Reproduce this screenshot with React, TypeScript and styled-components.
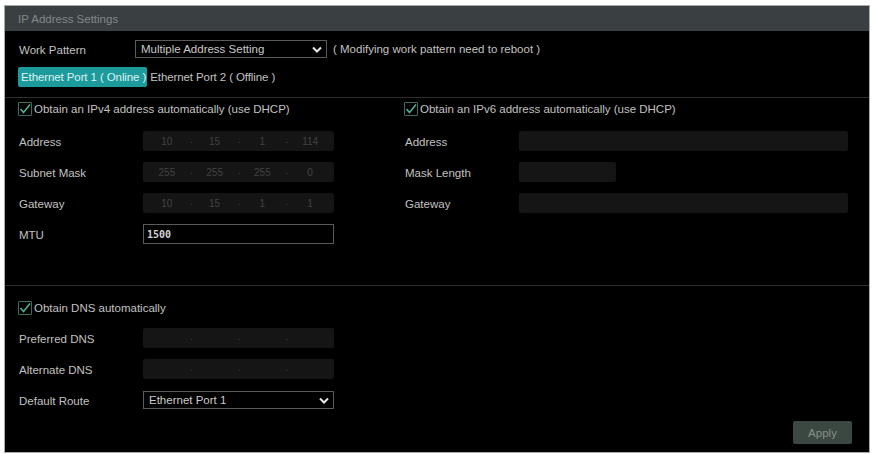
import styled, { createGlobalStyle } from 'styled-components';

const GlobalStyle = createGlobalStyle`
    html, body {
        margin: 0;
        padding: 0;
        background: #ffffff;
    }
    * {
        box-sizing: border-box;
    }
`;

const Page = styled.div`
    width: 874px;
    height: 454px;
    padding: 5px 4px 1px 4px;
    font-family: "Liberation Sans", Arial, sans-serif;
    font-size: 11.5px;
    color: #c2c2c2;
`;

const Panel = styled.div`
    width: 866px;
    height: 448px;
    border: 1px solid #a9a9a9;
    background: #000000;
    display: flex;
    flex-direction: column;
`;

const TitleBar = styled.div`
    height: 25px;
    flex-shrink: 0;
    background: #3a3f42;
    color: #80878b;
    display: flex;
    align-items: center;
    padding-left: 13px;
`;

const Body = styled.div`
    flex: 1;
    display: flex;
    flex-direction: column;
`;

const TopArea = styled.div`
    padding: 9px 14px 10px 14px;
    display: flex;
    flex-direction: column;
    gap: 9px;
`;

const Row = styled.div`
    display: flex;
    align-items: center;
    height: 18px;
`;

const Label = styled.div<{ $w: number }>`
    width: ${p => p.$w}px;
    flex-shrink: 0;
    padding-top: 2px;
    white-space: nowrap;
`;

const Select = styled.div<{ $w: number }>`
    width: ${p => p.$w}px;
    height: 18px;
    border: 1px solid #5a5a5a;
    background: #000;
    display: flex;
    align-items: center;
    justify-content: space-between;
    padding: 0 4px 0 5px;
    color: #cacaca;
`;

const Note = styled.span`
    margin-left: 6px;
    white-space: nowrap;
`;

const Tabs = styled.div`
    display: flex;
    align-items: center;
    height: 20px;
`;

const Tab = styled.div<{ $active?: boolean }>`
    height: 20px;
    display: flex;
    align-items: center;
    padding: 0 1px 0 3px;
    margin-left: ${p => (p.$active ? '-1px' : '0')};
    border-radius: 2px;
    background: ${p => (p.$active ? '#1c9a9c' : 'transparent')};
    color: ${p => (p.$active ? '#dff2f2' : '#c2c2c2')};
    white-space: nowrap;
    letter-spacing: -0.1px;
`;

const Divider = styled.div`
    height: 1px;
    background: #2e2e2e;
`;

const Section = styled.div<{ $top: number; $h?: number }>`
    padding: ${p => p.$top}px 14px 0 14px;
    height: ${p => (p.$h ? `${p.$h}px` : 'auto')};
    display: grid;
    grid-template-columns: 315px 445px;
    column-gap: 71px;
    align-content: start;
`;

const Column = styled.div`
    display: flex;
    flex-direction: column;
`;

const CheckRow = styled.div`
    display: flex;
    align-items: center;
    gap: 2px;
    height: 14px;
    margin-left: -1px;
    white-space: nowrap;
`;

const Box = styled.div`
    width: 14px;
    height: 14px;
    border: 1px solid #3f6c62;
    border-radius: 1px;
    display: flex;
    align-items: center;
    justify-content: center;
`;

const FieldGrid = styled.div<{ $label: number; $top: number }>`
    margin-top: ${p => p.$top}px;
    display: grid;
    grid-template-columns: ${p => p.$label}px 1fr;
    grid-auto-rows: 20px;
    row-gap: 11px;
    align-items: center;
`;

const IpBox = styled.div`
    width: 191px;
    height: 20px;
    background: #151515;
    border-radius: 2px;
    display: grid;
    grid-template-columns: repeat(4, 1fr);
    color: #424242;
    font-size: 10px;
`;

const IpSeg = styled.div<{ $dot?: boolean }>`
    position: relative;
    display: flex;
    align-items: center;
    justify-content: center;
    &::after {
        content: '${p => (p.$dot ? '.' : '')}';
        position: absolute;
        right: -2px;
        top: 3px;
    }
`;

const Blank = styled.div<{ $w: number }>`
    width: ${p => p.$w}px;
    height: 20px;
    background: #151515;
    border-radius: 2px;
`;

const TextInput = styled.div`
    width: 191px;
    height: 20px;
    border: 1px solid #5a5a5a;
    background: #000;
    display: flex;
    align-items: center;
    padding-left: 3px;
    font-family: "DejaVu Sans Mono", "Liberation Mono", monospace;
    font-weight: bold;
    font-size: 10px;
    color: #d2d2d2;
`;

const Footer = styled.div`
    margin-top: auto;
    display: flex;
    justify-content: flex-end;
    padding: 0 17px 8px 0;
`;

const ApplyButton = styled.button`
    width: 59px;
    height: 23px;
    border: none;
    border-radius: 2px;
    background: #3b4842;
    color: #84918b;
    font-family: "Liberation Sans", Arial, sans-serif;
    font-size: 11.5px;
`;

const Chevron = () => (
    <svg width="10" height="7" viewBox="0 0 10 7">
        <path d="M1 1.5 L5 5.5 L9 1.5" fill="none" stroke="#e6e6e6" strokeWidth="2" />
    </svg>
);

const Check = ({ label }: { label: string }) => (
    <CheckRow>
        <Box>
            <svg width="12" height="12" viewBox="0 0 12 12">
                <path d="M1.5 6 L4.5 9.5 L11 1.5" fill="none" stroke="#4fae94" strokeWidth="1.6" />
            </svg>
        </Box>
        <span>{label}</span>
    </CheckRow>
);

const Ip = ({ parts }: { parts: string[] }) => (
    <IpBox>
        {parts.map((part, i) => (
            <IpSeg key={i} $dot={i < 3}>{part}</IpSeg>
        ))}
    </IpBox>
);

const App = () => {
    return (
        <Page>
            <GlobalStyle />
            <Panel>
                <TitleBar>IP Address Settings</TitleBar>
                <Body>
                    <TopArea>
                        <Row>
                            <Label $w={116}>Work Pattern</Label>
                            <Select $w={192}>
                                <span>Multiple Address Setting</span>
                                <Chevron />
                            </Select>
                            <Note>( Modifying work pattern need to reboot )</Note>
                        </Row>
                        <Tabs>
                            <Tab $active>Ethernet Port 1 ( Online )</Tab>
                            <Tab>Ethernet Port 2 ( Offline )</Tab>
                        </Tabs>
                    </TopArea>
                    <Divider />
                    <Section $top={4} $h={187}>
                        <Column>
                            <Check label="Obtain an IPv4 address automatically (use DHCP)" />
                            <FieldGrid $label={124} $top={15}>
                                <Label $w={124}>Address</Label>
                                <Ip parts={['10', '15', '1', '114']} />
                                <Label $w={124}>Subnet Mask</Label>
                                <Ip parts={['255', '255', '255', '0']} />
                                <Label $w={124}>Gateway</Label>
                                <Ip parts={['10', '15', '1', '1']} />
                                <Label $w={124}>MTU</Label>
                                <TextInput>1500</TextInput>
                            </FieldGrid>
                        </Column>
                        <Column>
                            <Check label="Obtain an IPv6 address automatically (use DHCP)" />
                            <FieldGrid $label={114} $top={15}>
                                <Label $w={114}>Address</Label>
                                <Blank $w={329} />
                                <Label $w={114}>Mask Length</Label>
                                <Blank $w={97} />
                                <Label $w={114}>Gateway</Label>
                                <Blank $w={329} />
                            </FieldGrid>
                        </Column>
                    </Section>
                    <Divider />
                    <Section $top={15}>
                        <Column>
                            <Check label="Obtain DNS automatically" />
                            <FieldGrid $label={124} $top={13}>
                                <Label $w={124}>Preferred DNS</Label>
                                <Ip parts={['', '', '', '']} />
                                <Label $w={124}>Alternate DNS</Label>
                                <Ip parts={['', '', '', '']} />
                                <Label $w={124}>Default Route</Label>
                                <Select $w={191}>
                                    <span>Ethernet Port 1</span>
                                    <Chevron />
                                </Select>
                            </FieldGrid>
                        </Column>
                    </Section>
                    <Footer>
                        <ApplyButton>Apply</ApplyButton>
                    </Footer>
                </Body>
            </Panel>
        </Page>
    );
};

export default App;
